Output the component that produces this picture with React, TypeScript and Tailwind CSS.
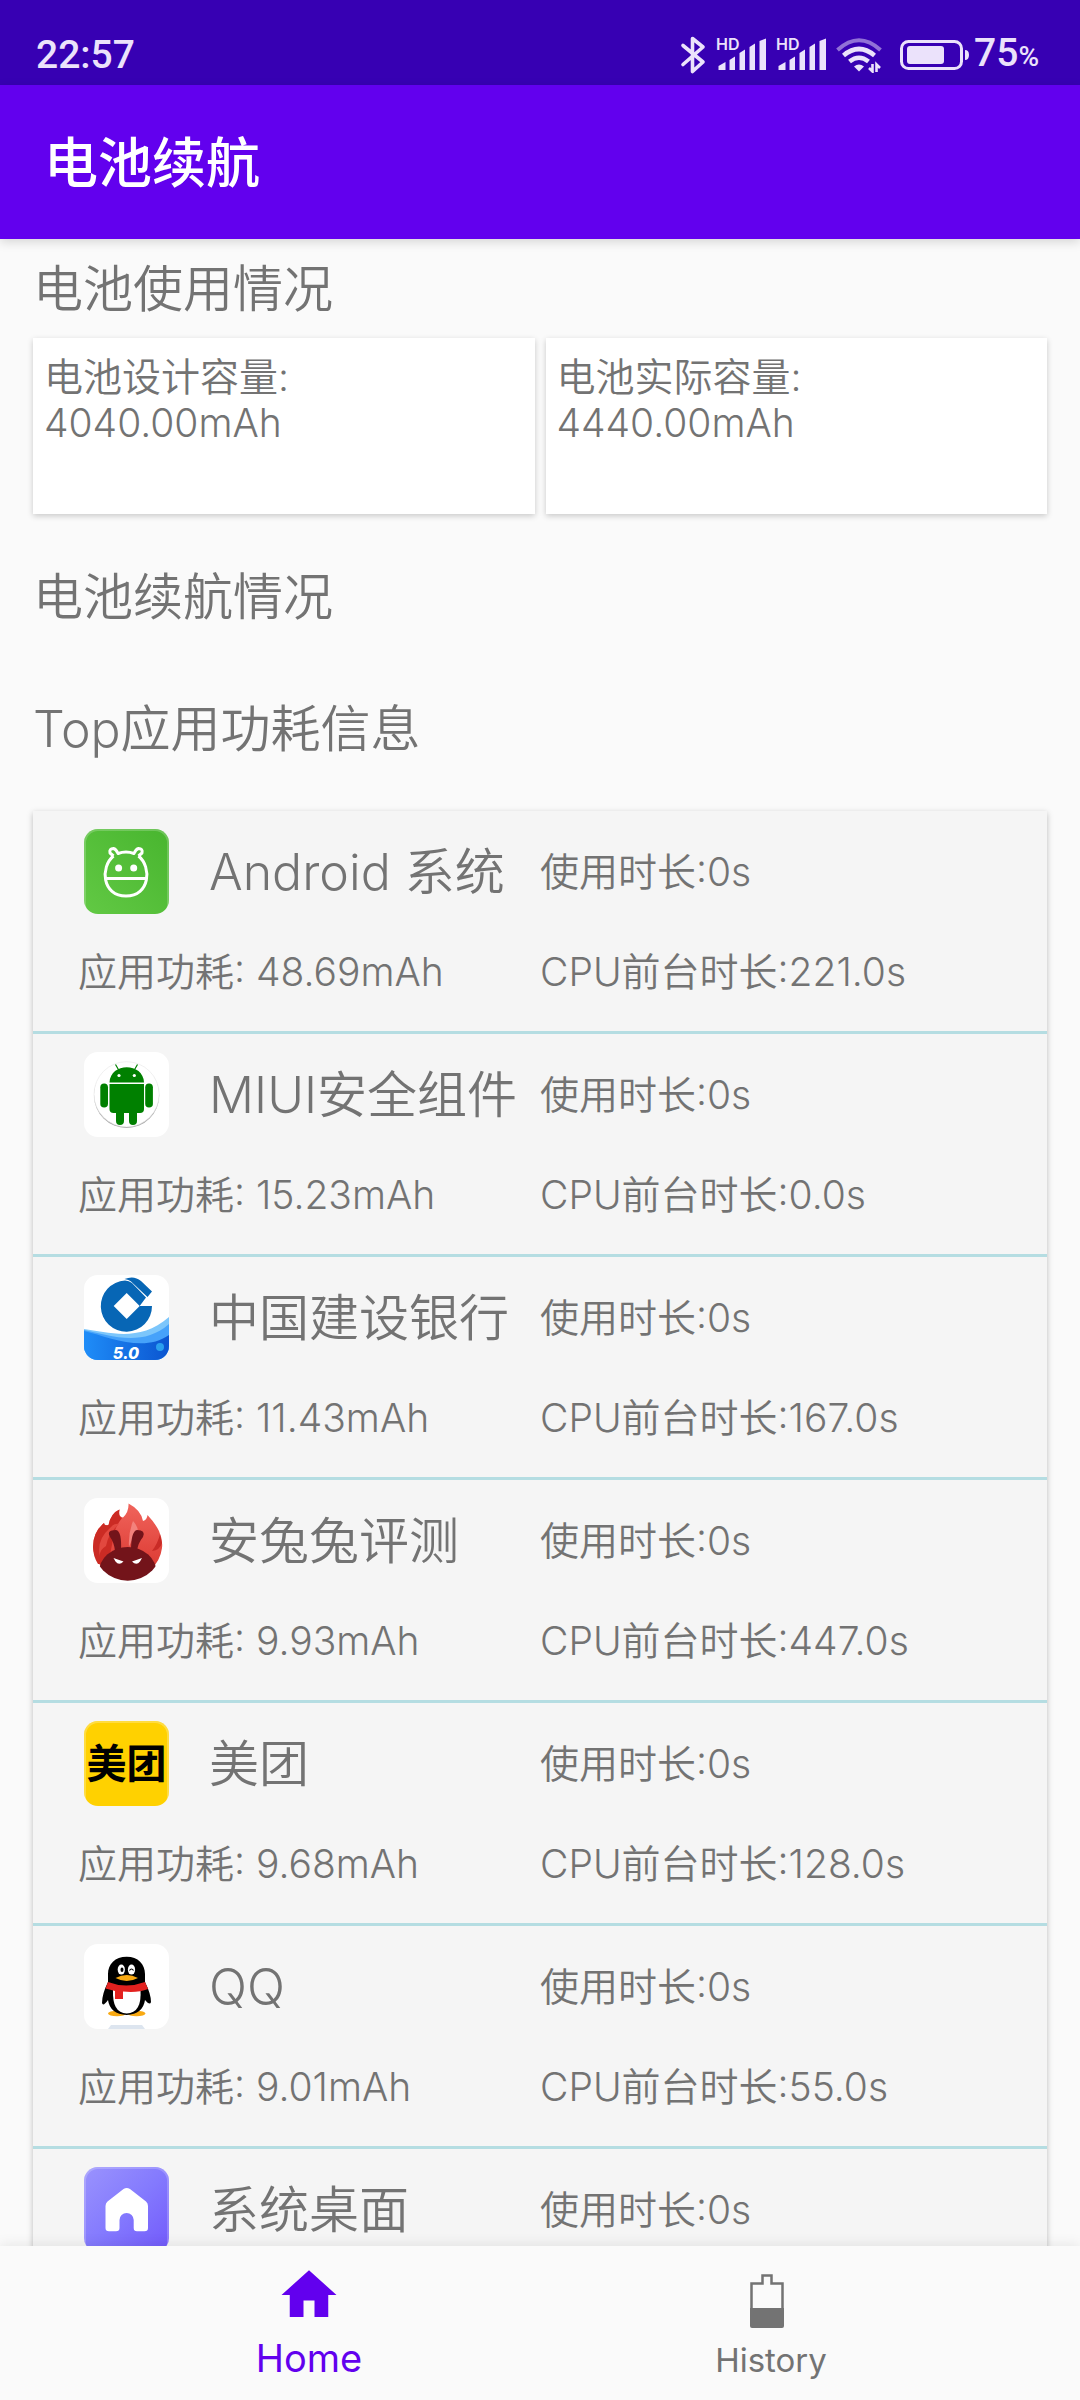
import { useState } from 'react';
import type { ReactNode } from 'react';

type AppUsage = {
  name: string;
  icon: ReactNode;
  power: string;
  usage: string;
  cpu: string;
};

const AndroidIcon = () => (
  <svg viewBox="0 0 85 85" className="h-full w-full" aria-hidden="true">
    <defs>
      <linearGradient id="android-bg" x1="1" y1="0" x2="0" y2="1">
        <stop offset="0" stopColor="#48b52f" />
        <stop offset="1" stopColor="#62c944" />
      </linearGradient>
    </defs>
    <rect width="85" height="85" fill="url(#android-bg)" />
    <rect x="1" y="1" width="83" height="88" rx="13" fill="none" stroke="#fff" strokeOpacity="0.2" strokeWidth="2" />
    <g fill="none" stroke="#fff" strokeWidth="3" strokeLinejoin="round">
      <path d="M29.500 27 L26 24 Q25 19.500 29.500 19.500 Q32 20 34 24.500 Q42 21.500 50 24.500 Q52 20 54.500 19.500 Q59 19.500 58 24 L54.500 27" />
      <path d="M29.500 27 C16 38 18 67 42 67 C66 67 68 38 54.500 27" />
      <path d="M21 49.500 H63" />
    </g>
    <circle cx="34.600" cy="39" r="3.500" fill="#fff" />
    <circle cx="49.700" cy="39" r="3.500" fill="#fff" />
  </svg>
);

const RobotIcon = () => (
  <svg viewBox="0 0 85 85" className="h-full w-full" aria-hidden="true">
    <rect width="85" height="85" fill="#fff" />
    <circle cx="42.600" cy="43.500" r="32.600" fill="#a8a8a8" />
    <circle cx="42.600" cy="42.300" r="32.600" fill="#fff" stroke="#e6e6e6" strokeWidth="0.600" />
    <g fill="#008000">
      <path d="M25.500 30.500 C26 10 59.500 10 60 30.500 Z" />
      <path d="M25.500 32 H60 V57 Q60 61 56 61 H29.500 Q25.500 61 25.500 57 Z" />
      <rect x="16.300" y="31.500" width="7.700" height="24" rx="3.800" />
      <rect x="61.200" y="31.500" width="7.700" height="24" rx="3.800" />
      <path d="M32 58 H40 V69 a4 4 0 0 1 -8 0 Z M45 58 H53 V69 a4 4 0 0 1 -8 0 Z" />
    </g>
    <path d="M31.500 12.500 L35 18.500 M53.500 12.500 L50 18.500" stroke="#008000" strokeWidth="1.200" />
    <circle cx="35" cy="23.500" r="1.600" fill="#fff" />
    <circle cx="50.300" cy="23.500" r="1.600" fill="#fff" />
  </svg>
);

const BankIcon = () => (
  <svg viewBox="0 0 85 85" className="h-full w-full" aria-hidden="true">
    <defs>
      <linearGradient id="bank-wave" x1="0" y1="0" x2="1" y2="0">
        <stop offset="0" stopColor="#1f8df8" />
        <stop offset="1" stopColor="#0b55d0" />
      </linearGradient>
    </defs>
    <rect width="85" height="85" fill="#fff" />
    <path d="M0 54 C25 57 55 68 85 42 V85 H0 Z" fill="#7cc6fb" />
    <path d="M0 55 C25 60 58 73 85 49 V85 H0 Z" fill="#46a2fa" />
    <path d="M0 56 C25 62 60 78 85 60 V85 H0 Z" fill="url(#bank-wave)" />
    <circle cx="76" cy="72" r="4" fill="#2ba0ee" />
    <path d="M41 5.500 Q45 5.500 48 8 L62 22.500 L55.700 31 H68 A25.600 25.600 0 1 1 41 5.500 Z" fill="#0766b5" />
    <path d="M40.500 4 Q50 0 57 6 L68 16.500 L63.500 22 L47 6.500 Q45 4.500 40.500 4 Z" fill="#0766b5" />
    <path d="M42.700 18 L55.700 31 L42.700 44 L29.700 31 Z" fill="#fff" />
    <text x="42" y="84" textAnchor="middle" fontFamily="Inter, sans-serif" fontSize="16" fontWeight="800" fontStyle="italic" fill="#fff">5.0</text>
  </svg>
);

const RabbitIcon = () => (
  <svg viewBox="0 0 85 85" className="h-full w-full" aria-hidden="true">
    <defs>
      <linearGradient id="rabbit-fire" x1="0" y1="0" x2="0" y2="1">
        <stop offset="0" stopColor="#f0645c" />
        <stop offset="1" stopColor="#d9342c" />
      </linearGradient>
      <clipPath id="rabbit-clip">
        <circle cx="43.700" cy="48" r="34.700" />
      </clipPath>
    </defs>
    <rect width="85" height="85" fill="#fff" />
    <path d="M20 25 Q20 28 24.500 27 Q27 15 35.500 11.500 Q34 19 39 19.500 Q45 14 44.500 5.500 Q57 12 59 23 Q63 22 63.500 17 Q71 25 75 33 Q79 42 78 50 A34.700 34.700 0 0 1 9 49 Q9 34 20 25 Z" fill="url(#rabbit-fire)" />
    <path d="M20 25 Q20 28 24.500 27 Q27 15 35.500 11.500 Q34 19 38 20 Q30 30 29 42 L24 66 H14 Q9 58 9 49 Q9 34 20 25 Z" fill="#cb2b24" />
    <path d="M26 30 Q30 25 35 26 Q24 36 22 48 Q15 52 16 59 Q12 42 26 30 Z" fill="#e2483f" />
    <path d="M49 23 Q54 28 54 34 Q49 38 45 49 Q44 36 49 23 Z" fill="#f3827c" />
    <path d="M76 36 Q74 45 68 53 Q76 52 78 45 Z" fill="#c92b26" />
    <g fill="#73141a">
      <path d="M26 39 Q22 32 32 32 Q38 33 37 53 H31 Q30 44 26 39 Z" />
      <path d="M59 39 Q62 32 53 32 Q47 33 47 53 H53 Q54 45 59 39 Z" />
      <ellipse cx="43.700" cy="75" rx="29" ry="26" clipPath="url(#rabbit-clip)" />
    </g>
    <path d="M29.500 60 L39.500 63.500 Q35 68 31.500 63.500 Z M58 60 L48 63.500 Q52.500 68 56 63.500 Z" fill="#fff" />
  </svg>
);

const MeituanIcon = () => (
  <svg viewBox="0 0 85 85" className="h-full w-full" aria-hidden="true">
    <rect width="85" height="85" fill="#ffd100" />
    <rect x="1" y="1" width="83" height="88" rx="13" fill="none" stroke="#fff" strokeOpacity="0.25" strokeWidth="2" />
    <text x="42.500" y="57" textAnchor="middle" fontFamily="'Noto Sans CJK SC', sans-serif" fontSize="40" fontWeight="700" fill="#000">美团</text>
  </svg>
);

const QQIcon = () => (
  <svg viewBox="0 0 85 85" className="h-full w-full" aria-hidden="true">
    <rect width="85" height="85" fill="#fff" />
    <path d="M27 81 H58 L61 85 H24 Z" fill="#dde5ef" />
    <ellipse cx="33" cy="69.500" rx="9" ry="2.800" fill="#f8a912" />
    <ellipse cx="52.500" cy="69.500" rx="9" ry="2.800" fill="#f8a912" />
    <path d="M42.700 12.700 C54 12.700 61 20 61 30 V38 Q67 50 67 58 Q66 62 61 56 Q59 70 42.700 71 Q26 70 24 56 Q19 63 18 59 Q18 50 24 38 V30 C24 20 31 12.700 42.700 12.700 Z" fill="#000" />
    <path d="M29 46 H56.500 Q58 69 42.700 69.500 Q28 69 29 46 Z" fill="#fff" />
    <path d="M24 38 Q42 45 61 38 L64 45 Q54 49 39 47.500 V55 H31 V47 L21.500 44.500 Z" fill="#e3211f" />
    <ellipse cx="37.300" cy="25.600" rx="3.600" ry="5" fill="#fff" />
    <ellipse cx="47.500" cy="25.600" rx="3.600" ry="5" fill="#fff" />
    <ellipse cx="38" cy="25.800" rx="1.500" ry="2.200" fill="#000" />
    <path d="M45.500 26.500 Q47.500 23.500 49.500 26.500" fill="none" stroke="#000" strokeWidth="1.200" />
    <path d="M31.500 34 Q42.700 28 54 34 Q42.700 40 31.500 34 Z" fill="#f8a912" />
  </svg>
);

const LauncherIcon = () => (
  <svg viewBox="0 0 85 85" className="h-full w-full" aria-hidden="true">
    <defs>
      <linearGradient id="launcher-bg" x1="0" y1="0" x2="1" y2="1">
        <stop offset="0" stopColor="#9a93fd" />
        <stop offset="0.500" stopColor="#847afe" />
        <stop offset="1" stopColor="#7259fb" />
      </linearGradient>
    </defs>
    <rect width="85" height="85" fill="url(#launcher-bg)" />
    <rect x="1" y="1" width="83" height="88" rx="13" fill="none" stroke="#fff" strokeOpacity="0.2" strokeWidth="2" />
    <path d="M39.500 22 Q42.700 20 46 22 L62 34.500 Q64 36 64 39 V61 Q64 64.300 60.500 64.300 H53 Q49.700 64.300 49.700 61 V53 A7 7 0 0 0 35.500 53 V61 Q35.500 64.300 32 64.300 H25 Q21.500 64.300 21.500 61 V39 Q21.500 36 23.500 34.500 Z" fill="#fff" />
  </svg>
);

const apps: AppUsage[] = [
  { name: 'Android 系统', icon: <AndroidIcon />, power: '48.69mAh', usage: '0s', cpu: '221.0s' },
  { name: 'MIUI安全组件', icon: <RobotIcon />, power: '15.23mAh', usage: '0s', cpu: '0.0s' },
  { name: '中国建设银行', icon: <BankIcon />, power: '11.43mAh', usage: '0s', cpu: '167.0s' },
  { name: '安兔兔评测', icon: <RabbitIcon />, power: '9.93mAh', usage: '0s', cpu: '447.0s' },
  { name: '美团', icon: <MeituanIcon />, power: '9.68mAh', usage: '0s', cpu: '128.0s' },
  { name: 'QQ', icon: <QQIcon />, power: '9.01mAh', usage: '0s', cpu: '55.0s' },
  { name: '系统桌面', icon: <LauncherIcon />, power: '8.52mAh', usage: '0s', cpu: '0.0s' },
];

const BluetoothIcon = () => (
  <svg viewBox="0 0 26 40" className="h-10 w-[26px]" aria-hidden="true">
    <path d="M3 10.500 L23 27 L12.500 36.500 V3.500 L23 12 L3 29.500" fill="none" stroke="currentColor" strokeWidth="3.600" strokeLinecap="round" strokeLinejoin="round" />
  </svg>
);

const SignalIcon = () => (
  <svg viewBox="0 0 50 34" className="h-[34px] w-[50px] overflow-visible" aria-hidden="true">
    <text x="0" y="12" fontFamily="Inter, sans-serif" fontSize="16" fontWeight="600" fill="currentColor">HD</text>
    <path d="M2.500 28 L9.500 24 V32 H2.500 Z M13.500 22 L19 18.500 V32 H13.500 Z M23.500 15 L29 11.500 V32 H23.500 Z M33.500 9 L39 5.500 V32 H33.500 Z M43.500 3 L50 0.500 V32 H43.500 Z" fill="currentColor" />
  </svg>
);

const WifiIcon = () => (
  <svg viewBox="0 0 46 36" className="h-9 w-[46px]" aria-hidden="true">
    <g fill="none" stroke="currentColor" strokeWidth="4">
      <path d="M1.500 13 Q23 -6.500 44.500 13" strokeOpacity="0.500" />
      <path d="M7.500 18.500 Q23 5.500 38.500 18.500" strokeWidth="4.600" />
      <path d="M13.500 24.500 Q23 17 32.500 24.500" strokeWidth="4.600" />
    </g>
    <path d="M18 29.500 Q23 25.500 28 29.500 L23 34.500 Z" fill="currentColor" />
    <path d="M36.500 27 V34.500 L33 31 M40.500 35 V27.500 L44 31" fill="none" stroke="currentColor" strokeWidth="2.600" />
  </svg>
);

const BatteryIcon = () => (
  <svg viewBox="0 0 70 30" className="h-[30px] w-[70px]" aria-hidden="true">
    <rect x="1.500" y="1.500" width="60" height="27" rx="7" fill="none" stroke="currentColor" strokeWidth="3" />
    <rect x="7" y="6" width="37" height="18" rx="3" fill="currentColor" />
    <path d="M65 10 Q69 10 69 15 Q69 20 65 20 Z" fill="currentColor" />
  </svg>
);

const HomeIcon = () => (
  <svg viewBox="0 0 24 24" className="h-[66px] w-[66px]" aria-hidden="true">
    <path d="M10 20v-6h4v6h5v-8h3L12 3 2 12h3v8z" fill="currentColor" />
  </svg>
);

const HistoryIcon = () => (
  <svg viewBox="0 0 42 54" className="h-[54px] w-[42px]" aria-hidden="true">
    <path d="M1.500 34 V9.500 H12.500 V1.500 H21.500 V9.500 H32.500 V34" fill="none" stroke="currentColor" strokeWidth="2.500" />
    <path d="M0 34 H34 V52 Q34 54 32 54 H2 Q0 54 0 52 Z" fill="currentColor" />
  </svg>
);

const StatusBar = () => (
  <div className="flex h-[85px] shrink-0 items-end justify-between bg-[#3700b3] pr-[41px] pb-[7px] pl-9 text-[#ebe2fb]">
    <span className="font-[Roboto] text-[39px] leading-[46px] font-medium">22:57</span>
    <div className="flex h-[46px] items-center gap-2.5">
      <BluetoothIcon />
      <SignalIcon />
      <SignalIcon />
      <WifiIcon />
      <div className="flex items-center gap-1 pl-2">
        <BatteryIcon />
        <span className="font-[Roboto] text-[39px] leading-[46px] font-medium">
          75<span className="text-[28px]">%</span>
        </span>
      </div>
    </div>
  </div>
);

const CapacityCard = ({ label, value }: { label: string; value: string }) => (
  <div className="min-h-[176px] flex-1 bg-white px-[11px] pt-4 text-[39px] leading-[46px] shadow-[0_2px_6px_rgba(0,0,0,0.2)]">
    <p>{label}</p>
    <p>{value}</p>
  </div>
);

const AppRow = ({ app }: { app: AppUsage }) => (
  <li className="grid grid-cols-2 gap-y-7 border-b-3 border-[#b5dde2] pt-[18px] pb-[29px] text-[39px] leading-[60px] whitespace-nowrap">
    <div className="flex items-center gap-10 pl-[51px]">
      <div className="h-[85px] w-[85px] shrink-0 overflow-hidden rounded-[14px]">{app.icon}</div>
      <h3 className="text-[50px]">{app.name}</h3>
    </div>
    <p className="self-center">使用时长:{app.usage}</p>
    <p className="pl-[45px]">应用功耗: {app.power}</p>
    <p>CPU前台时长:{app.cpu}</p>
  </li>
);

const App = () => {
  const [tab, setTab] = useState<'home' | 'history'>('home');

  return (
    <div className="flex h-screen flex-col bg-[#fafafa] font-[Inter,'Noto_Sans_CJK_SC',sans-serif] text-[#737373]">
      <StatusBar />

      <header className="z-10 flex h-[154px] shrink-0 items-center bg-[#6200ee] px-11 pt-1 shadow-[0_3px_10px_rgba(0,0,0,0.15)]">
        <h1 className="text-[54px] leading-[72px] font-medium text-white">电池续航</h1>
      </header>

      <main className="flex-1 overflow-y-auto px-[33px] font-[350] [scrollbar-width:none]">
        <h2 className="pt-[17px] pb-[15px] text-[50px] leading-[67px]">电池使用情况</h2>
        <div className="flex gap-[11px]">
          <CapacityCard label="电池设计容量:" value="4040.00mAh" />
          <CapacityCard label="电池实际容量:" value="4440.00mAh" />
        </div>

        <h2 className="mt-[50px] text-[50px] leading-[67px]">电池续航情况</h2>
        <h2 className="mt-[65px] text-[50px] leading-[67px]">Top应用功耗信息</h2>

        <ul className="mt-12 bg-[#f5f5f5] shadow-[0_2px_6px_rgba(0,0,0,0.25)]">
          {apps.map(app => (
            <AppRow key={app.name} app={app} />
          ))}
        </ul>
      </main>

      {/* Bottom Navigation */}
      <nav className="z-10 flex h-[154px] shrink-0 justify-center bg-[#fafafa] shadow-[0_-2px_12px_rgba(0,0,0,0.08)]">
        <button
          type="button"
          onClick={() => setTab('home')}
          className={`flex w-[462px] flex-col items-center justify-end gap-1.5 pb-[18px] ${tab === 'home' ? 'text-[#6200ee]' : ''}`}
        >
          <HomeIcon />
          <span className="text-[38px] leading-[48px]">Home</span>
        </button>
        <button
          type="button"
          onClick={() => setTab('history')}
          className={`flex w-[462px] flex-col items-center justify-end gap-2.5 pb-[18px] ${tab === 'history' ? 'text-[#6200ee]' : ''}`}
        >
          <HistoryIcon />
          <span className="text-[33px] leading-[44px]">History</span>
        </button>
      </nav>
    </div>
  );
};

export default App;
